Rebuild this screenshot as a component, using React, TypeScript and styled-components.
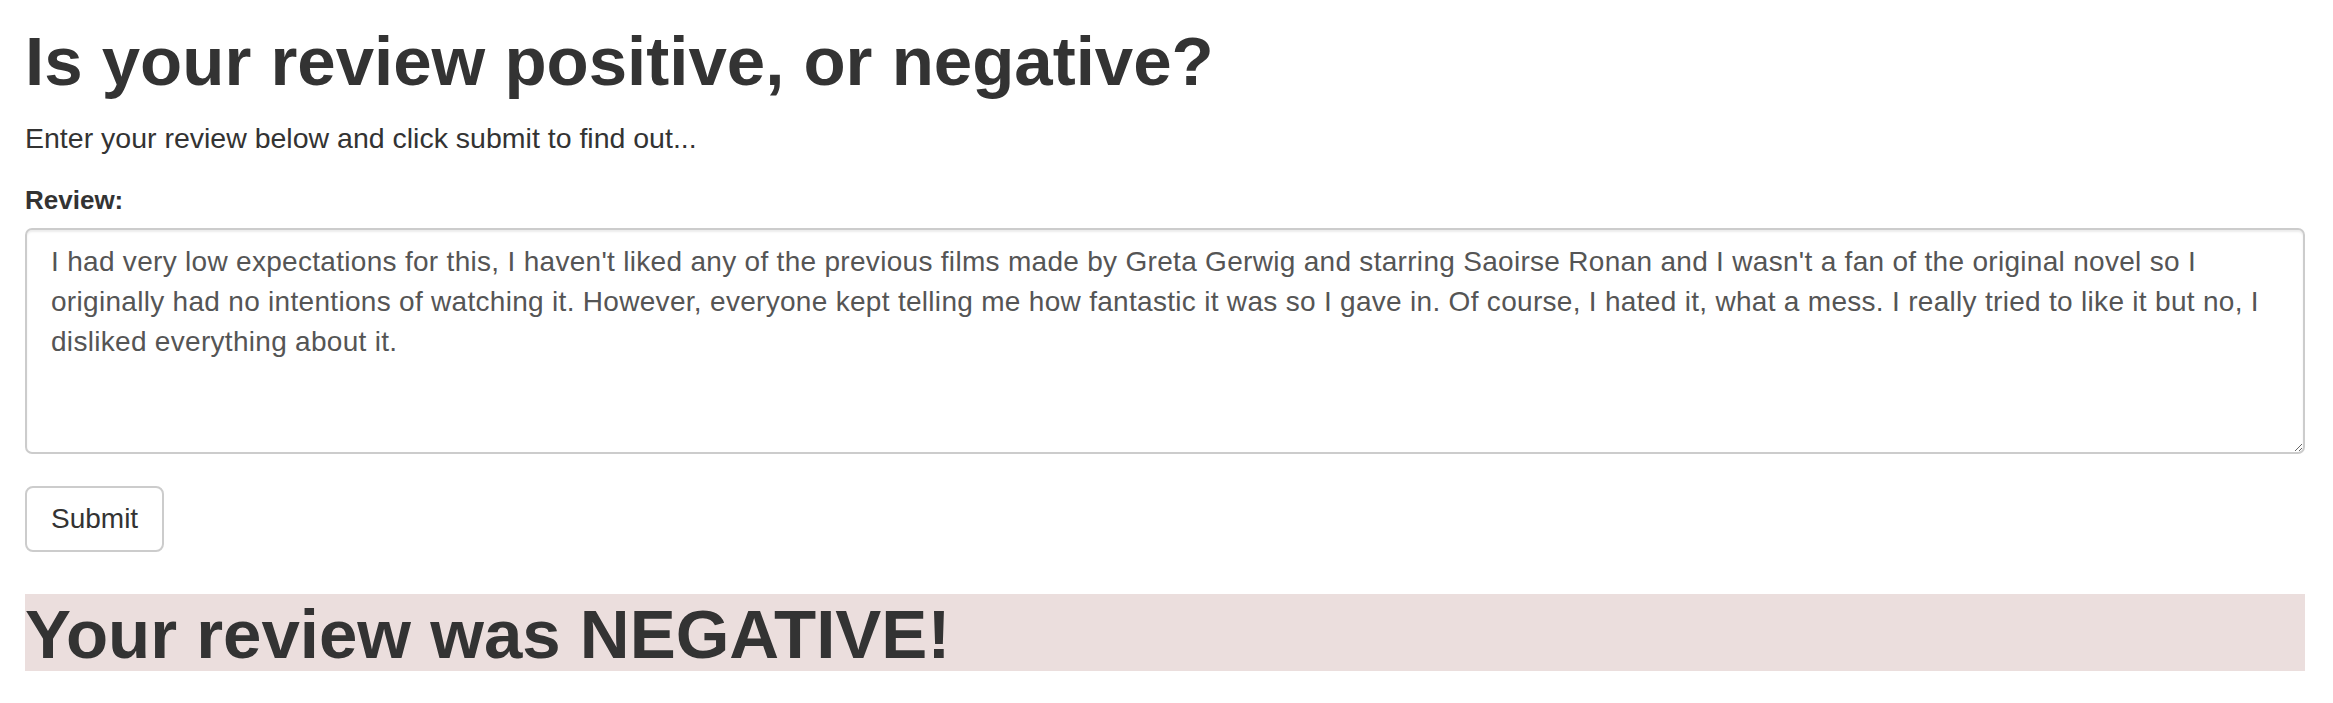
import React, { useState } from "react";
import styled, { createGlobalStyle } from "styled-components";

const GlobalStyle = createGlobalStyle`
  html, body {
    margin: 0;
    padding: 0;
    background: #ffffff;
  }
  body {
    font-family: "Liberation Sans", Arial, Helvetica, sans-serif;
    color: #333333;
    font-size: 28px;
    line-height: 40px;
  }
  * {
    box-sizing: border-box;
  }
`;

const Page = styled.div`
  display: flex;
  flex-direction: column;
  padding: 23px 28px 0 25px;
`;

const Title = styled.h1`
  margin: 0;
  font-size: 69px;
  line-height: 77px;
  font-weight: 700;
  color: #333333;
`;

const Intro = styled.p`
  margin: 18px 0 0;
  font-size: 28.5px;
  line-height: 40px;
`;

const Form = styled.form`
  display: flex;
  flex-direction: column;
  align-items: flex-start;
  margin-top: 25px;
`;

const Label = styled.label`
  display: block;
  font-size: 26px;
  line-height: 34px;
  font-weight: 700;
  margin-bottom: 11px;
`;

const ReviewInput = styled.textarea`
  display: block;
  width: 100%;
  height: 226px;
  padding: 12px 24px;
  font-family: "Liberation Sans", Arial, Helvetica, sans-serif;
  font-size: 28px;
  line-height: 40px;
  letter-spacing: 0.3px;
  color: #555555;
  background: #ffffff;
  border: 2px solid #cccccc;
  border-radius: 7px;
  box-shadow: inset 0 2px 2px rgba(0, 0, 0, 0.075);
  outline: none;
`;

const SubmitButton = styled.button`
  margin-top: 32px;
  padding: 11px 24px;
  font-family: "Liberation Sans", Arial, Helvetica, sans-serif;
  font-size: 28px;
  line-height: 40px;
  color: #333333;
  background: #ffffff;
  border: 2px solid #cccccc;
  border-radius: 8px;
  cursor: pointer;
`;

const Result = styled.h1<{ $tone: "negative" | "positive" }>`
  margin: 42px 0 0;
  padding-top: 5px;
  font-size: 69px;
  line-height: 72px;
  font-weight: 700;
  color: #333333;
  background: ${(p) => (p.$tone === "negative" ? "#ebdedd" : "#dff0d8")};
`;

const initialReview =
  "I had very low expectations for this, I haven't liked any of the previous films made by Greta Gerwig and starring Saoirse Ronan and I wasn't a fan of the original novel so I originally had no intentions of watching it. However, everyone kept telling me how fantastic it was so I gave in. Of course, I hated it, what a mess. I really tried to like it but no, I disliked everything about it.";

const App = (): JSX.Element => {
  const [review, setReview] = useState(initialReview);

  return (
    <>
      <GlobalStyle />
      <Page>
        <Title>Is your review positive, or negative?</Title>
        <Intro>Enter your review below and click submit to find out...</Intro>
        <Form onSubmit={(e) => e.preventDefault()}>
          <Label htmlFor="review">Review:</Label>
          <ReviewInput
            id="review"
            value={review}
            onChange={(e) => setReview(e.target.value)}
          />
          <SubmitButton type="submit">Submit</SubmitButton>
        </Form>
        <Result $tone="negative">Your review was NEGATIVE!</Result>
      </Page>
    </>
  );
};

export default App;
